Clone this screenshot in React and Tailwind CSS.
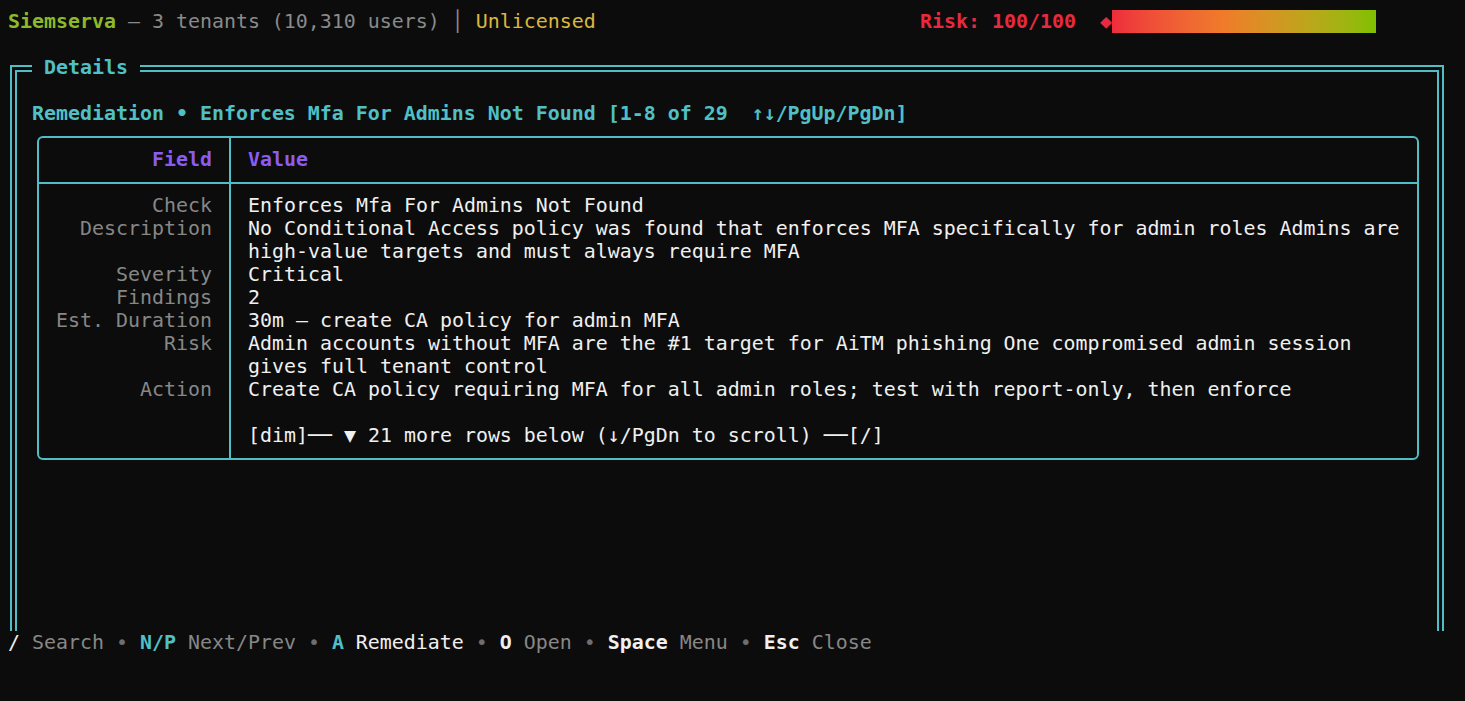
import React from "react";

const rows = [
  ["Check", ["Enforces Mfa For Admins Not Found"]],
  [
    "Description",
    [
      "No Conditional Access policy was found that enforces MFA specifically for admin roles Admins are",
      "high-value targets and must always require MFA",
    ],
  ],
  ["Severity", ["Critical"]],
  ["Findings", ["2"]],
  ["Est. Duration", ["30m — create CA policy for admin MFA"]],
  [
    "Risk",
    [
      "Admin accounts without MFA are the #1 target for AiTM phishing One compromised admin session",
      "gives full tenant control",
    ],
  ],
  ["Action", ["Create CA policy requiring MFA for all admin roles; test with report-only, then enforce"]],
  ["", [""]],
  ["", ["[dim]── ▼ 21 more rows below (↓/PgDn to scroll) ──[/]"]],
];

const App = () => {
  return (
    <main className="h-[701px] w-full overflow-hidden bg-[#0c0c0c] pt-[10px] pl-[8px] font-['DejaVu_Sans_Mono','Liberation_Mono',monospace] text-[19.93px] leading-[23px] text-[#f0f0f0] whitespace-pre">
      {/* status line */}
      <div className="flex h-[23px] items-center">
        <div className="w-[912px]">
          <span className="font-bold text-[#8cb92a]">Siemserva</span>
          <span className="text-[#8a8a8a]"> — 3 tenants (10,310 users) │ </span>
          <span className="text-[#dcb73c]">Unlicensed</span>
        </div>
        <span className="font-bold text-[#e8293e]">Risk: 100/100</span>
        <span className="text-[#e8293e]">  ◆</span>
        <div className="h-[23px] w-[264px] bg-linear-to-r from-[#ee2b3c] via-[#ef7c2a] via-43% to-[#7fc000]" />
      </div>
      <div className="h-[23px]" />

      {/* details panel */}
      <div className="ml-[2px] w-[1434px] text-[#50c0c7]">
        <div className="flex h-[23px] items-center">
          <div className="h-[14px] w-[22px] self-end border-t-[7px] border-l-[7px] border-double border-[#4fbec5]" />
          <span className="px-[12px] font-bold">Details</span>
          <div className="h-[14px] flex-1 self-end border-t-[7px] border-r-[7px] border-double border-[#4fbec5]" />
        </div>
        <div className="h-[552px] border-x-[7px] border-double border-[#4fbec5] pl-[15px]">
          <div className="h-[23px]" />
          <div className="font-bold">Remediation • Enforces Mfa For Admins Not Found [1-8 of 29  ↑↓/PgUp/PgDn]</div>

          <div className="mt-[11px] ml-[5px] w-[1382px] rounded-[6px] border-2 border-[#4fbec5]">
            <div className="grid grid-cols-[192px_1fr] border-b-2 border-[#4fbec5] font-bold text-[#8c5cf2]">
              <div className="border-r-2 border-[#4fbec5] pt-[10px] pr-[17px] pb-[11px] text-right">Field</div>
              <div className="pt-[10px] pb-[11px] pl-[17px]">Value</div>
            </div>
            <div className="grid grid-cols-[192px_1fr]">
              <div className="h-[10px] border-r-2 border-[#4fbec5]" />
              <div />
              {rows.map(([label, lines], i) => (
                <React.Fragment key={i}>
                  <div className="border-r-2 border-[#4fbec5] pr-[17px] text-right text-[#878787]">{label}</div>
                  <div className="pl-[17px] text-[#f0f0f0]">
                    {lines.map((line, j) => (
                      <div key={j} className="h-[23px]">
                        {line}
                      </div>
                    ))}
                  </div>
                </React.Fragment>
              ))}
              <div className="h-[11px] border-r-2 border-[#4fbec5]" />
              <div />
            </div>
          </div>
        </div>
      </div>

      {/* key hints */}
      <div className="h-[23px]">
        <span className="text-[#f0f0f0]">/</span>
        <span className="text-[#878787]"> Search </span>
        <span className="text-[#6e6e6e]">• </span>
        <span className="font-bold text-[#50c0c7]">N/P</span>
        <span className="text-[#878787]"> Next/Prev </span>
        <span className="text-[#6e6e6e]">• </span>
        <span className="font-bold text-[#50c0c7]">A</span>
        <span className="text-[#f0f0f0]"> Remediate </span>
        <span className="text-[#6e6e6e]">• </span>
        <span className="font-bold text-[#f0f0f0]">O</span>
        <span className="text-[#878787]"> Open </span>
        <span className="text-[#6e6e6e]">• </span>
        <span className="font-bold text-[#f0f0f0]">Space</span>
        <span className="text-[#878787]"> Menu </span>
        <span className="text-[#6e6e6e]">• </span>
        <span className="font-bold text-[#f0f0f0]">Esc</span>
        <span className="text-[#878787]"> Close</span>
      </div>
    </main>
  );
};

export default App;
